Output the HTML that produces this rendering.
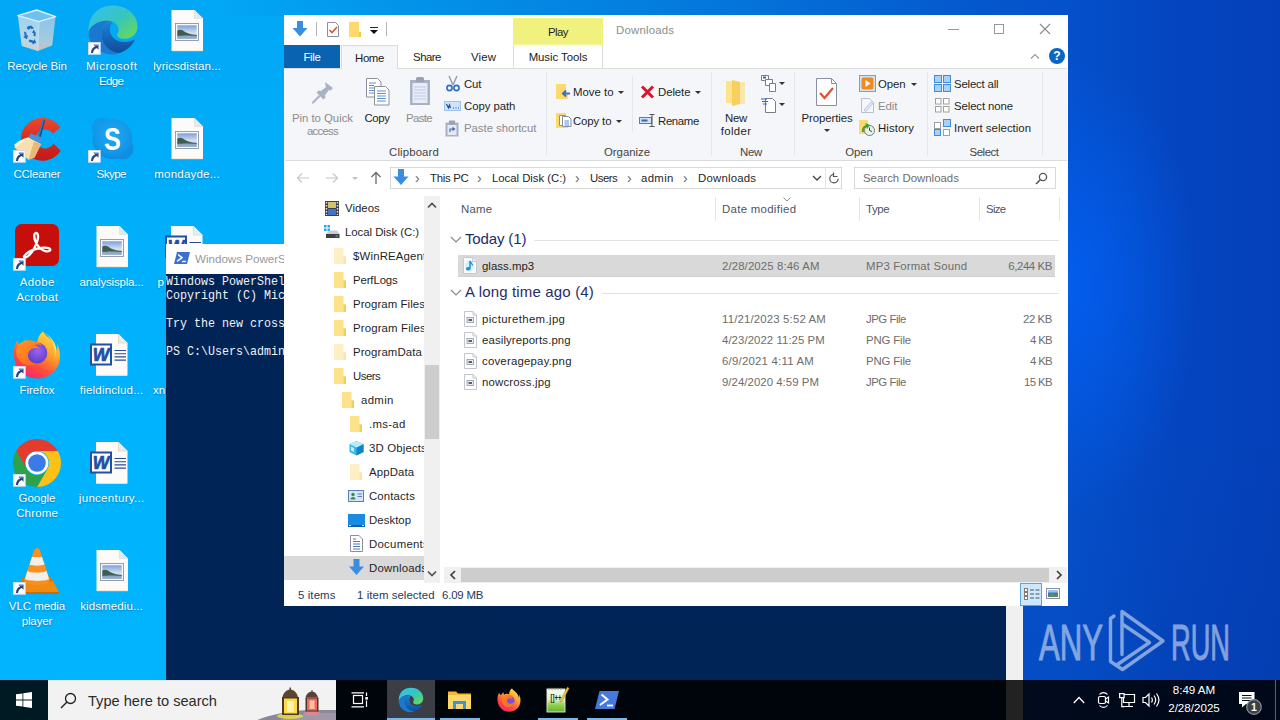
<!DOCTYPE html>
<html lang="en">
<head>
<meta charset="utf-8">
<title>Downloads</title>
<style>
*{box-sizing:border-box;margin:0;padding:0}
html,body{width:1280px;height:720px;overflow:hidden}
body{position:relative;font-family:"Liberation Sans",sans-serif;font-size:12px;color:#000;background:#01b0fb}
.abs{position:absolute}
.t{position:absolute;white-space:nowrap;line-height:14px;font-size:11.4px}
/* wallpaper */
#wp-right{left:1000px;top:0;width:280px;height:720px;background:radial-gradient(ellipse 130px 230px at 68px 285px,#035dee 0%,rgba(3,93,238,.55) 45%,rgba(3,93,238,0) 100%),linear-gradient(180deg,rgba(0,0,0,0) 60%,rgba(0,20,60,.06) 100%),linear-gradient(90deg,#0550cb 24%,#0446c0 60%,#0440b9 100%)}
#wp-top{left:0;top:0;width:1280px;height:16px;background:linear-gradient(90deg,#02a7f5 0%,#02a7f5 17%,#0398ec 28%,#0478dc 55%,#0458cd 76%,#0550cb 83.4%,#0446c0 91.25%,#0440b9 100%)}
#wp-left{left:0;top:0;width:300px;height:720px;background:linear-gradient(180deg,#02a7f5 0%,#01abf8 14%,#00b3fe 58%,#01b4fc 100%)}
/* desktop icons */
.dl{position:absolute;width:90px;text-align:center;color:#fff;font-size:11.5px;line-height:15px;white-space:nowrap;text-shadow:0 1px 1.500px rgba(0,0,0,.28),0 0 1px rgba(0,0,0,.15)}
.di{position:absolute}
.sc{position:absolute;width:11px;height:11px;background:#fff;border:1px solid #c9d3dc}
/* powershell */
#ps{left:166px;top:244px;width:857px;height:476px;background:#012456}
#ps-title{left:0;top:0;width:857px;height:30px;background:#fff}
#ps-scroll{left:840px;top:30px;width:17px;height:446px;background:#f0f0f0}
.pst{position:absolute;left:0;white-space:pre;font-family:"Liberation Mono",monospace;font-size:13.2px;line-height:14px;color:#f2f2f2;transform:scaleX(.8838);transform-origin:0 0}
/* explorer */
#ex{left:284px;top:15px;width:784px;height:591px;background:#fff;overflow:hidden}

/* explorer details */
#exc .t{color:#1f1f1f}
.g{color:#8c8c8c !important}
.sep{position:absolute;width:1px;background:#e5e7ea}
.tab{position:absolute;top:45px;height:23px;text-align:center;line-height:25px;font-size:11.4px;color:#1b1b1b}
.arr{position:absolute;width:0;height:0;border-left:3px solid transparent;border-right:3px solid transparent;border-top:3px solid #333}
.grp{position:absolute;top:145px;text-align:center;line-height:14px;color:#444;font-size:11.4px}
.chev{color:#666 !important;font-size:14px !important}
.hd{color:#4b5566 !important}
.gh{color:#1f2d68 !important;font-size:15px !important;line-height:18px !important}
.dm{color:#6d6d6d !important}
.sb{color:#1e395b !important}
/* taskbar */
#tb{left:0;top:680px;width:1280px;height:40px;background:rgba(0,0,0,.86)}
</style>
</head>
<body>
<div class="abs" id="wp-left"></div>
<div class="abs" id="wp-right"></div>
<div class="abs" id="wp-top"></div>

<!-- DESKTOP ICONS -->
<div class="abs" id="desk" style="left:0;top:0;width:1280px;height:680px;overflow:hidden">
<svg class="abs" style="left:13px;top:6px" width="48" height="48" viewBox="0 0 48 48">
<defs><linearGradient id="rb10" x1="0" y1="0" x2="0" y2="1"><stop offset="0" stop-color="#a9d6f0"/><stop offset=".7" stop-color="#c6dde9"/><stop offset="1" stop-color="#e6cfc4"/></linearGradient>
<linearGradient id="rb20" x1="0" y1="0" x2="0" y2="1"><stop offset="0" stop-color="#96c8e6"/><stop offset=".7" stop-color="#b4cedc"/><stop offset="1" stop-color="#d8c2b8"/></linearGradient></defs>
<path d="M4.800 9.600L23.700 4l18.900 6.700L25.900 15.700z" fill="#7cc3ee" opacity=".9"/>
<path d="M4.800 9.600l21.100 6.100L24.800 45.100 8.700 40.100z" fill="url(#rb10)" opacity=".92"/>
<path d="M25.900 15.700l16.700-5-3.400 28.900-14.400 5.500z" fill="url(#rb20)" opacity=".92"/>
<path d="M4.800 9.600L23.700 4l18.900 6.700L25.900 15.700z" fill="none" stroke="#dff0fa" stroke-width="1.400" stroke-linejoin="round"/>
<path d="M25.900 15.700L24.800 45.100" stroke="#d4e6f2" stroke-width=".8"/>
<g fill="#1a6cc4"><path d="M14.500 20.500l3.500-1 3 2.500-2.500 1.200-1-1.200-1.500 1.800-2.200-1z"/><path d="M11 25.500l2.200 1 .5 3.300 1.500-.5-1.300 4-3.700-2.300 1.500-.7z"/><path d="M16.500 33.500l4.300 1.200.4-1.700 2.200 3.600-4 1.800.2-1.500-4-1.300z"/><path d="M20.500 23.500l2.300 3.500-.4 3.500-2.100-1 .8-2-1.900-.5z"/></g>
</svg>
<div class="dl" style="left:-8.06px;top:59px;letter-spacing:-0.11px">Recycle Bin</div>
<svg class="abs" style="left:86.5px;top:4px" width="52" height="52" viewBox="0 0 50 50">
<defs><linearGradient id="eg11" x1="0" y1="0" x2="1" y2="1"><stop offset="0" stop-color="#35c1f1"/><stop offset=".5" stop-color="#36c5c0"/><stop offset="1" stop-color="#6fdc4a"/></linearGradient>
<linearGradient id="eg21" x1="0" y1="0" x2="0" y2="1"><stop offset="0" stop-color="#1d84d8"/><stop offset="1" stop-color="#114a9b"/></linearGradient></defs>
<path d="M1.500 24C2 10 12 1.500 25 1.500c14 0 23.500 9.500 23.500 20 0 7.500-5.500 12-12 12-5 0-7.500-2-7.500-4 0-1.500 1.500-2 1.500-5 0-4-4-8.500-11-8.500C10 16 3 21 1.500 28z" fill="url(#eg11)"/>
<path d="M19.500 16C10 16 1.500 22 1.500 28c.5 11 10 20.500 22 20.500 3 0 5.500-.5 8-1.500C22 46 14 38 14 29c0-6 3-10.500 7.500-13z" fill="#1b78d0"/>
<path d="M21.500 16C17 19 14 23.500 14 29c0 10 8 17.500 17.500 18 6-2 11-6 14-11.500.5-1-.5-1.500-1.500-1-2.500 1.500-5 2-8 2-8.500 0-14-5.500-14-12 0-3 1-5 2.500-7-1-.5-2-1-3-1.500z" fill="url(#eg21)"/>
</svg>
<svg class="abs" style="left:87.5px;top:42px" width="13" height="13" viewBox="0 0 13 13"><rect width="12.500" height="12.500" fill="#fdfdfd"/><rect x=".4" y=".4" width="11.800" height="11.800" fill="none" stroke="#c3d3e2" stroke-width=".8"/><path d="M5.500 2.800h5v5l-1.700-1.700C6.800 7 5.300 8.500 5 11H3c0-3.500 1.700-5.800 4.200-6.500z" fill="#24457f"/><path d="M5.500 2.800h5v1.200h-3.800z" fill="#4d8bd8"/></svg>
<div class="dl" style="left:66.77px;top:59px;letter-spacing:0.54px">Microsoft</div><div class="dl" style="left:66.19px;top:74px;letter-spacing:-0.61px">Edge</div>
<svg class="abs" style="left:171px;top:9px" width="34" height="44" viewBox="0 0 34 44">
<defs><linearGradient id="sky2" x1="0" y1="0" x2="0" y2="1"><stop offset="0" stop-color="#7f9fdb"/><stop offset=".55" stop-color="#cfdff0"/><stop offset="1" stop-color="#b5cce0"/></linearGradient></defs>
<path d="M.5 1h23l8.500 8.500V42H.5z" fill="#fcfbfa"/><path d="M23.500 1v8.500h8.500z" fill="#dcebf7"/><path d="M23.500 1v8.500h8.500" stroke="#e6d9cf" stroke-width=".7" fill="none"/>
<path d="M1 41.700h30.500" stroke="#f3e6da" stroke-width="1"/>
<rect x="4.500" y="14.500" width="23" height="17" fill="#f6f7f8" stroke="#8a97a4" stroke-width=".9"/>
<rect x="6.300" y="16.300" width="19.400" height="13.400" fill="url(#sky2)"/>
<path d="M6.300 21.500c2-1.200 4-1.200 6 .3 2.500 2 7 3.800 13.400 4.200v1.200H6.300z" fill="#3f5c50"/>
<path d="M6.300 27c5-.8 14-.8 19.400 0v2.700H6.300z" fill="#8fa9c4"/>
</svg>
<div class="dl" style="left:142.03px;top:59px;letter-spacing:0.07px">lyricsdistan...</div>
<svg class="abs" style="left:12px;top:115px" width="50" height="48" viewBox="0 0 50 48">
<defs><linearGradient id="cc3" x1="0" y1="0" x2="0" y2="1"><stop offset="0" stop-color="#ea4a2c"/><stop offset=".5" stop-color="#d82a20"/><stop offset="1" stop-color="#c01a18"/></linearGradient></defs>
<path d="M48.300 12.400A21.500 21.500 0 1 0 48.700 35.700L41.500 28.500A9.500 9.500 0 1 1 41 18.600z" fill="url(#cc3)"/>
<path d="M31 4.500l-5.300 17.500 2.800 1L33.300 5.500z" fill="#1a4f94"/><path d="M31 4.500l1 .3-5.200 17.700-1.100-.5z" fill="#3b7fd0"/>
<path d="M18.500 18.500l10.500 3.500.5 4-5 2-8.500-4.500z" fill="#4a90d9"/>
<path d="M16 22.500l13 6.500-6.500 13.500-6 2.300L2.500 32.500v-3z" fill="#f8dfae"/>
<path d="M22 26.500l7 2.800-6.500 13.300-6 2.200z" fill="#e9b876"/>
<path d="M2.500 29.500c4-3.500 9-6 13.500-7l2.500 1.200c-5 1.500-10 4.200-14 8z" fill="#fdf0d4"/>
</svg>
<svg class="abs" style="left:13px;top:150px" width="13" height="13" viewBox="0 0 13 13"><rect width="12.500" height="12.500" fill="#fdfdfd"/><rect x=".4" y=".4" width="11.800" height="11.800" fill="none" stroke="#c3d3e2" stroke-width=".8"/><path d="M5.500 2.800h5v5l-1.700-1.700C6.800 7 5.300 8.500 5 11H3c0-3.500 1.700-5.800 4.200-6.500z" fill="#24457f"/><path d="M5.500 2.800h5v1.200h-3.800z" fill="#4d8bd8"/></svg>
<div class="dl" style="left:-8.10px;top:167px;letter-spacing:-0.20px">CCleaner</div>
<svg class="abs" style="left:87.5px;top:114px" width="48" height="48" viewBox="0 0 48 48">
<defs><radialGradient id="sk4" cx=".5" cy=".4" r=".65"><stop offset="0" stop-color="#1fa9f3"/><stop offset=".7" stop-color="#1297e8"/><stop offset="1" stop-color="#0d85dc"/></radialGradient></defs>
<circle cx="14" cy="14" r="10.500" fill="#119aea"/><circle cx="35" cy="35" r="10.500" fill="#0f8fe2"/>
<circle cx="24.500" cy="25" r="20" fill="url(#sk4)"/>
<text x="0" y="0" transform="translate(24.500 36) scale(.8 1)" font-family="Liberation Sans, sans-serif" font-weight="bold" font-size="31.500" fill="#fff" text-anchor="middle">S</text>
</svg>
<svg class="abs" style="left:87.5px;top:150px" width="13" height="13" viewBox="0 0 13 13"><rect width="12.500" height="12.500" fill="#fdfdfd"/><rect x=".4" y=".4" width="11.800" height="11.800" fill="none" stroke="#c3d3e2" stroke-width=".8"/><path d="M5.500 2.800h5v5l-1.700-1.700C6.800 7 5.300 8.500 5 11H3c0-3.500 1.700-5.800 4.200-6.500z" fill="#24457f"/><path d="M5.500 2.800h5v1.200h-3.800z" fill="#4d8bd8"/></svg>
<div class="dl" style="left:66.24px;top:167px;letter-spacing:-0.51px">Skype</div>
<svg class="abs" style="left:171px;top:117px" width="34" height="44" viewBox="0 0 34 44">
<defs><linearGradient id="sky5" x1="0" y1="0" x2="0" y2="1"><stop offset="0" stop-color="#7f9fdb"/><stop offset=".55" stop-color="#cfdff0"/><stop offset="1" stop-color="#b5cce0"/></linearGradient></defs>
<path d="M.5 1h23l8.500 8.500V42H.5z" fill="#fcfbfa"/><path d="M23.500 1v8.500h8.500z" fill="#dcebf7"/><path d="M23.500 1v8.500h8.500" stroke="#e6d9cf" stroke-width=".7" fill="none"/>
<path d="M1 41.700h30.500" stroke="#f3e6da" stroke-width="1"/>
<rect x="4.500" y="14.500" width="23" height="17" fill="#f6f7f8" stroke="#8a97a4" stroke-width=".9"/>
<rect x="6.300" y="16.300" width="19.400" height="13.400" fill="url(#sky5)"/>
<path d="M6.300 21.500c2-1.200 4-1.200 6 .3 2.500 2 7 3.800 13.400 4.200v1.200H6.300z" fill="#3f5c50"/>
<path d="M6.300 27c5-.8 14-.8 19.400 0v2.700H6.300z" fill="#8fa9c4"/>
</svg>
<div class="dl" style="left:142.10px;top:167px;letter-spacing:0.20px">mondayde...</div>
<svg class="abs" style="left:14px;top:223px" width="46" height="44" viewBox="0 0 46 44">
<rect x="1" y="1" width="44" height="42" rx="7" fill="#c60f0b"/>
<path d="M10 33c1.500-4 8-7.500 13.500-9 5-1.400 11-1.500 12.500.5 1 1.500-1 3-4 2.500-5-1-9.500-6.500-11-12-1-4-.8-7.500.8-8 1.700-.4 2.700 2.500 2 6.500-1 6-5 14-9 18-2 2-4.300 3-4.800 1.500z" fill="none" stroke="#fff" stroke-width="2.400" transform="translate(0 3.500) scale(1 .92)"/>
</svg>
<svg class="abs" style="left:13px;top:258px" width="13" height="13" viewBox="0 0 13 13"><rect width="12.500" height="12.500" fill="#fdfdfd"/><rect x=".4" y=".4" width="11.800" height="11.800" fill="none" stroke="#c3d3e2" stroke-width=".8"/><path d="M5.500 2.800h5v5l-1.700-1.700C6.800 7 5.300 8.500 5 11H3c0-3.500 1.700-5.800 4.200-6.500z" fill="#24457f"/><path d="M5.500 2.800h5v1.200h-3.800z" fill="#4d8bd8"/></svg>
<div class="dl" style="left:-7.83px;top:275px;letter-spacing:0.35px">Adobe</div><div class="dl" style="left:-7.83px;top:290px;letter-spacing:0.34px">Acrobat</div>
<svg class="abs" style="left:95.5px;top:225px" width="34" height="44" viewBox="0 0 34 44">
<defs><linearGradient id="sky7" x1="0" y1="0" x2="0" y2="1"><stop offset="0" stop-color="#7f9fdb"/><stop offset=".55" stop-color="#cfdff0"/><stop offset="1" stop-color="#b5cce0"/></linearGradient></defs>
<path d="M.5 1h23l8.500 8.500V42H.5z" fill="#fcfbfa"/><path d="M23.500 1v8.500h8.500z" fill="#dcebf7"/><path d="M23.500 1v8.500h8.500" stroke="#e6d9cf" stroke-width=".7" fill="none"/>
<path d="M1 41.700h30.500" stroke="#f3e6da" stroke-width="1"/>
<rect x="4.500" y="14.500" width="23" height="17" fill="#f6f7f8" stroke="#8a97a4" stroke-width=".9"/>
<rect x="6.300" y="16.300" width="19.400" height="13.400" fill="url(#sky7)"/>
<path d="M6.300 21.500c2-1.200 4-1.200 6 .3 2.500 2 7 3.800 13.400 4.200v1.200H6.300z" fill="#3f5c50"/>
<path d="M6.300 27c5-.8 14-.8 19.400 0v2.700H6.300z" fill="#8fa9c4"/>
</svg>
<div class="dl" style="left:66.41px;top:275px;letter-spacing:-0.18px">analysispla...</div>
<svg class="abs" style="left:165px;top:225px" width="40" height="44" viewBox="0 0 40 44">
<path d="M6 1h22.500l9 9v32.500H6z" fill="#fdfbf8"/><path d="M28.500 1v9h9z" fill="#e4eef8"/><path d="M28.500 1v9h9" stroke="#e2cfc4" stroke-width=".8" fill="none"/>
<path d="M6.500 42.300h30.500" stroke="#f3e6da" stroke-width="1"/>
<path d="M24.500 17.500h11.500M24.500 20.700h11.500M24.500 23.900h11.500M24.500 27.100h11.500" stroke="#2a4a96" stroke-width="1.100"/>
<rect x="1" y="11.500" width="20" height="20" fill="#fff" stroke="#1f4fa8" stroke-width="2"/>
<text x="11" y="27.800" font-family="Liberation Sans, sans-serif" font-weight="bold" font-style="italic" font-size="17.500" fill="#1f4fa6" stroke="#1f4fa6" stroke-width=".7" text-anchor="middle">W</text>
</svg>
<svg class="abs" style="left:13px;top:330px" width="48" height="50" viewBox="0 0 48 50">
<defs><linearGradient id="ff19" x1=".8" y1="0" x2=".2" y2="1"><stop offset="0" stop-color="#ffe14a"/><stop offset=".35" stop-color="#ffa52a"/><stop offset=".7" stop-color="#ff4a3d"/><stop offset="1" stop-color="#f1217c"/></linearGradient>
<radialGradient id="ff29" cx=".55" cy=".4" r=".65"><stop offset="0" stop-color="#9a62f5"/><stop offset="1" stop-color="#5a3cc0"/></radialGradient>
<linearGradient id="ff39" x1="0" y1="0" x2="1" y2="1"><stop offset="0" stop-color="#ff9a1f"/><stop offset="1" stop-color="#ff5a2a"/></linearGradient></defs>
<path d="M30 1.500c-4 3-6 8-5.500 12.500C21 12 17 12.500 14 14.500c0-2-.5-3.500-1.500-5-1 2-3 3-4.500 5.500C5.500 14 4.500 12 4.500 10 2 14 .5 19 1 26 2 39 12 48.500 24.500 48.500S47 39 47 26c0-5-1-8.500-3-12 .5 3 .5 5 0 7-1-6-4.500-10-7.500-12.500C33.500 6 31 4 30 1.500z" fill="url(#ff19)"/>
<circle cx="23.800" cy="23" r="10.500" fill="url(#ff29)"/>
<path transform="translate(-.7 -2)" d="M4 24C4 16 11 11.500 19 12.500c5 .5 9 2.500 11 5.500-2.500-1.500-5.500-2-8-1 2.500.5 4.500 2 5.500 4-3-1.500-6.500-1.500-9 .5-2.500 2-3.500 5-2.500 8 1 3.500 4.500 6 8.500 6-3 2-7.500 2.500-11.500 1C8 34.500 4 30 4 24z" fill="url(#ff39)"/>
<path d="M30 1.500C36 6 42 13 42 22c0 4-1 7-2 9 4-6 4-14 1-19-2.500-4.500-7-8-11-10.500z" fill="#ffe96a" opacity=".8"/>
</svg>
<svg class="abs" style="left:13px;top:366px" width="13" height="13" viewBox="0 0 13 13"><rect width="12.500" height="12.500" fill="#fdfdfd"/><rect x=".4" y=".4" width="11.800" height="11.800" fill="none" stroke="#c3d3e2" stroke-width=".8"/><path d="M5.500 2.800h5v5l-1.700-1.700C6.800 7 5.300 8.500 5 11H3c0-3.500 1.700-5.800 4.200-6.500z" fill="#24457f"/><path d="M5.500 2.800h5v1.200h-3.800z" fill="#4d8bd8"/></svg>
<div class="dl" style="left:-8.01px;top:383px;letter-spacing:-0.02px">Firefox</div>
<svg class="abs" style="left:89.5px;top:333px" width="40" height="44" viewBox="0 0 40 44">
<path d="M6 1h22.500l9 9v32.500H6z" fill="#fdfbf8"/><path d="M28.500 1v9h9z" fill="#e4eef8"/><path d="M28.500 1v9h9" stroke="#e2cfc4" stroke-width=".8" fill="none"/>
<path d="M6.500 42.300h30.500" stroke="#f3e6da" stroke-width="1"/>
<path d="M24.500 17.500h11.500M24.500 20.700h11.500M24.500 23.900h11.500M24.500 27.100h11.500" stroke="#2a4a96" stroke-width="1.100"/>
<rect x="1" y="11.500" width="20" height="20" fill="#fff" stroke="#1f4fa8" stroke-width="2"/>
<text x="11" y="27.800" font-family="Liberation Sans, sans-serif" font-weight="bold" font-style="italic" font-size="17.500" fill="#1f4fa6" stroke="#1f4fa6" stroke-width=".7" text-anchor="middle">W</text>
</svg>
<div class="dl" style="left:66.61px;top:383px;letter-spacing:0.21px">fieldinclud...</div>
<svg class="abs" style="left:12px;top:438px" width="50" height="50" viewBox="0 0 50 50">
<path d="M4.220 13A24 24 0 0 1 45.780 13L25 13A12 12 0 0 0 14.600 31z" fill="#e33b2e"/>
<path d="M45.780 13A24 24 0 0 1 25 49L35.400 31A12 12 0 0 0 25 13z" fill="#fbc116"/>
<path d="M25 49A24 24 0 0 1 4.220 13L14.600 31A12 12 0 0 0 35.400 31z" fill="#2da24a"/>
<circle cx="25" cy="25" r="11.400" fill="#fff"/><circle cx="25" cy="25" r="8.800" fill="#3a7be8"/>
</svg>
<svg class="abs" style="left:13px;top:474px" width="13" height="13" viewBox="0 0 13 13"><rect width="12.500" height="12.500" fill="#fdfdfd"/><rect x=".4" y=".4" width="11.800" height="11.800" fill="none" stroke="#c3d3e2" stroke-width=".8"/><path d="M5.500 2.800h5v5l-1.700-1.700C6.800 7 5.300 8.500 5 11H3c0-3.500 1.700-5.800 4.200-6.500z" fill="#24457f"/><path d="M5.500 2.800h5v1.200h-3.800z" fill="#4d8bd8"/></svg>
<div class="dl" style="left:-8.02px;top:491px;letter-spacing:-0.03px">Google</div><div class="dl" style="left:-7.92px;top:506px;letter-spacing:0.17px">Chrome</div>
<svg class="abs" style="left:89.5px;top:441px" width="40" height="44" viewBox="0 0 40 44">
<path d="M6 1h22.500l9 9v32.500H6z" fill="#fdfbf8"/><path d="M28.500 1v9h9z" fill="#e4eef8"/><path d="M28.500 1v9h9" stroke="#e2cfc4" stroke-width=".8" fill="none"/>
<path d="M6.500 42.300h30.500" stroke="#f3e6da" stroke-width="1"/>
<path d="M24.500 17.500h11.500M24.500 20.700h11.500M24.500 23.900h11.500M24.500 27.100h11.500" stroke="#2a4a96" stroke-width="1.100"/>
<rect x="1" y="11.500" width="20" height="20" fill="#fff" stroke="#1f4fa8" stroke-width="2"/>
<text x="11" y="27.800" font-family="Liberation Sans, sans-serif" font-weight="bold" font-style="italic" font-size="17.500" fill="#1f4fa6" stroke="#1f4fa6" stroke-width=".7" text-anchor="middle">W</text>
</svg>
<div class="dl" style="left:66.65px;top:491px;letter-spacing:0.29px">juncentury...</div>
<svg class="abs" style="left:14px;top:547px" width="46" height="48" viewBox="0 0 46 48">
<path d="M9 30h28l8 15H1z" fill="#f08a10"/><path d="M1 45h44v2H1z" fill="#c96a06"/>
<path d="M9 30h28l2 4c-4 3-28 3-32 0z" fill="#d97508"/>
<path d="M23 1c1.500 0 2.500 1 3 2.500L36 33c0 3-6 5-13 5s-13-2-13-5L20 3.500C20.500 2 21.500 1 23 1z" fill="#f7901e"/>
<path d="M18 10h10l2.500 7.500c-3 1.500-12 1.500-15 0z" fill="#f3f0ec"/>
<path d="M13.500 24c4 2 15 2 19 0l2.500 8c-4 2.500-20 2.500-24 0z" fill="#f3f0ec"/>
</svg>
<svg class="abs" style="left:13px;top:582px" width="13" height="13" viewBox="0 0 13 13"><rect width="12.500" height="12.500" fill="#fdfdfd"/><rect x=".4" y=".4" width="11.800" height="11.800" fill="none" stroke="#c3d3e2" stroke-width=".8"/><path d="M5.500 2.800h5v5l-1.700-1.700C6.800 7 5.300 8.500 5 11H3c0-3.500 1.700-5.800 4.200-6.500z" fill="#24457f"/><path d="M5.500 2.800h5v1.200h-3.800z" fill="#4d8bd8"/></svg>
<div class="dl" style="left:-8.03px;top:599px;letter-spacing:-0.07px">VLC media</div><div class="dl" style="left:-8.06px;top:614px;letter-spacing:-0.12px">player</div>
<svg class="abs" style="left:95.5px;top:549px" width="34" height="44" viewBox="0 0 34 44">
<defs><linearGradient id="sky15" x1="0" y1="0" x2="0" y2="1"><stop offset="0" stop-color="#7f9fdb"/><stop offset=".55" stop-color="#cfdff0"/><stop offset="1" stop-color="#b5cce0"/></linearGradient></defs>
<path d="M.5 1h23l8.500 8.500V42H.5z" fill="#fcfbfa"/><path d="M23.500 1v8.500h8.500z" fill="#dcebf7"/><path d="M23.500 1v8.500h8.500" stroke="#e6d9cf" stroke-width=".7" fill="none"/>
<path d="M1 41.700h30.500" stroke="#f3e6da" stroke-width="1"/>
<rect x="4.500" y="14.500" width="23" height="17" fill="#f6f7f8" stroke="#8a97a4" stroke-width=".9"/>
<rect x="6.300" y="16.300" width="19.400" height="13.400" fill="url(#sky15)"/>
<path d="M6.300 21.500c2-1.200 4-1.200 6 .3 2.500 2 7 3.800 13.400 4.200v1.200H6.300z" fill="#3f5c50"/>
<path d="M6.300 27c5-.8 14-.8 19.400 0v2.700H6.300z" fill="#8fa9c4"/>
</svg>
<div class="dl" style="left:66.55px;top:599px;letter-spacing:0.10px">kidsmediu...</div>
<div class="dl" style="left:157.5px;top:275px;width:auto;text-align:left">p</div>
<div class="dl" style="left:153px;top:383px;width:auto;text-align:left">xn</div>
</div>
<!-- POWERSHELL -->
<div class="abs" id="ps">
  <div class="abs" id="ps-title"></div>
  <svg class="abs" style="left:8px;top:8px" width="16" height="12" viewBox="0 0 16 12"><path d="M3 0h13l-3 12H0z" fill="#3d6fd0"/><path d="M4 2.500l4 3.200-5 3.600" fill="none" stroke="#fff" stroke-width="1.500"/><path d="M8 9.500h4" stroke="#fff" stroke-width="1.400"/></svg>
  <span class="t" style="left:29px;top:8px;color:#999;font-size:11.6px">Windows PowerShell</span>
  <div class="abs" id="ps-scroll"></div>
  <div class="pst" style="top:31px">Windows PowerShell</div>
  <div class="pst" style="top:45px">Copyright (C) Microsoft Corporation. All rights reserved.</div>
  <div class="pst" style="top:73px">Try the new cross-platform PowerShell</div>
  <div class="pst" style="top:101px">PS C:\Users\admin&gt; </div>
</div>
<!-- EXPLORER -->
<div class="abs" id="ex"></div>
<div class="abs" id="exc" style="left:0;top:0;width:1280px;height:720px">
  <!-- title bar -->
  <div class="abs" style="left:513px;top:18px;width:90px;height:29px;background:linear-gradient(180deg,#f1f17f 0,#f1f17f 26px,#fbfbd8 27.500px,#fff 29px)"></div>
  <span class="t" style="left:513px;top:25px;width:90px;text-align:center;letter-spacing:-0.54px">Play</span>
  <span class="t g" style="left:616px;top:23px;letter-spacing:0.20px">Downloads</span>
  <!-- window controls -->
  <div class="abs" style="left:948px;top:29px;width:11px;height:1px;background:#979797"></div>
  <div class="abs" style="left:994px;top:24px;width:10px;height:10px;border:1px solid #979797"></div>
  <svg class="abs" style="left:1039px;top:23px" width="12" height="12" viewBox="0 0 12 12"><path d="M1 1L11 11M11 1L1 11" stroke="#8a8a8a" stroke-width="1.1" fill="none"/></svg>
  <!-- tabs -->
  <div class="tab" style="left:284px;width:56px;background:#0a63b1;color:#fff;letter-spacing:-0.29px">File</div>
  <div class="tab" style="left:341px;width:57px;height:24px;background:#f4f6f9;border:1px solid #dadbdc;border-bottom:none;line-height:24px;letter-spacing:-0.40px">Home</div>
  <div class="tab" style="left:398px;width:58px;letter-spacing:-0.52px">Share</div>
  <div class="tab" style="left:456px;width:55px;letter-spacing:0.12px">View</div>
  <div class="tab" style="left:513px;width:90px;border-left:1px solid #dcdcdc;border-right:1px solid #dcdcdc;letter-spacing:-0.05px">Music Tools</div>
  <!-- ribbon body -->
  <div class="abs" style="left:285px;top:68px;width:782px;height:93px;background:#f4f6f9;border-top:1px solid #dadbdc;border-bottom:1px solid #dadbdc"></div>
  <div class="abs" style="left:342px;top:68px;width:55px;height:1px;background:#f4f6f9"></div>
  <!-- quick access toolbar -->
  <svg class="abs" style="left:291px;top:20px" width="18" height="18" viewBox="0 0 18 18"><path d="M6 1h6v7h4.5L9 16.5 1.500 8H6z" fill="#3b8ede"/></svg>
  <div class="abs" style="left:316px;top:22px;width:1px;height:14px;background:#b5b5b5"></div>
  <svg class="abs" style="left:326px;top:21px" width="14" height="17" viewBox="0 0 14 17"><path d="M1.500 1.500h8l3 3v11h-11z" fill="#fff" stroke="#8a8fa3" stroke-width="1"/><path d="M3.500 9l2.500 2.500 5-5.500" fill="none" stroke="#e0532f" stroke-width="1.600"/></svg>
  <svg class="abs" style="left:348px;top:21px" width="14" height="17" viewBox="0 0 14 17"><path d="M1 1h10v10h2v5H1z" fill="#ffd96b"/><path d="M11 11h2v5h-2z" fill="#f2c64a"/></svg>
  <div class="abs" style="left:370px;top:27px;width:8px;height:1px;background:#222"></div>
  <div class="arr" style="left:370px;top:30px;border-left-width:4px;border-right-width:4px;border-top-width:4px;border-top-color:#111"></div>
  <div class="abs" style="left:386px;top:22px;width:1px;height:14px;background:#b5b5b5"></div>
  <!-- collapse + help -->
  <svg class="abs" style="left:1030px;top:52px" width="10" height="8" viewBox="0 0 10 8"><path d="M1 6.500l4-4 4 4" fill="none" stroke="#9a9a9a" stroke-width="1.200"/></svg>
  <div class="abs" style="left:1049px;top:48px;width:16px;height:16px;border-radius:8px;background:#0b66c2;color:#fff;font-weight:bold;font-size:12px;line-height:16px;text-align:center">?</div>

  <!-- RIBBON: clipboard -->
  <svg class="abs" style="left:310px;top:80px" width="26" height="26" viewBox="0 0 26 26"><g fill="#aab3c4"><path d="M15 2l8 6-2.500 2.500-1.500-.500-4 5 .500 2.500-2 2-7-7 2-2 2.500.500 5-4-.500-1.500z"/><path d="M9 15l1.500 1.500-7 7H2v-1.500z"/></g></svg>
  <span class="t g" style="left:284px;top:111px;width:77px;text-align:center;letter-spacing:-0.04px">Pin to Quick</span>
  <span class="t g" style="left:284px;top:124px;width:77px;text-align:center;letter-spacing:-0.75px">access</span>
  <svg class="abs" style="left:365px;top:77px" width="26" height="30" viewBox="0 0 26 30"><g fill="#fff" stroke="#8b8f99" stroke-width="1"><path d="M1.500 1.500h11l3.500 3.500v15h-14.500z"/><path d="M9.500 9.500h11l3.500 3.500v15h-14.500z"/></g><g stroke="#5b8fd6" stroke-width="1"><path d="M4 6h7M4 8.500h5M4 11h5M4 13.500h5M4 16h5"/><path d="M12 14h9M12 16.500h9M12 19h9M12 21.500h9M12 24h9"/></g></svg>
  <span class="t" style="left:357px;top:111px;width:40px;text-align:center;letter-spacing:-0.40px">Copy</span>
  <svg class="abs" style="left:409px;top:76px" width="22" height="30" viewBox="0 0 22 30"><rect x="1" y="4" width="20" height="25" fill="#a9b1c4"/><rect x="7" y="1" width="8" height="5" rx="1.500" fill="#9aa2b5"/><rect x="3.500" y="7" width="15" height="20" fill="#e8ecf8"/><path d="M5 11h12M5 14h12M5 17h12M5 20h12M5 23h12" stroke="#c3cbe6" stroke-width="1"/></svg>
  <span class="t g" style="left:399px;top:111px;width:40px;text-align:center;letter-spacing:-0.63px">Paste</span>
  <svg class="abs" style="left:445px;top:75px" width="16" height="17" viewBox="0 0 16 17"><path d="M4 1l4 9M12 1L8 10" stroke="#8d96a8" stroke-width="1.300" fill="none"/><circle cx="4.500" cy="13" r="2.600" fill="none" stroke="#2b6fc4" stroke-width="1.600"/><circle cx="11.500" cy="13" r="2.600" fill="none" stroke="#2b6fc4" stroke-width="1.600"/></svg>
  <span class="t" style="left:464px;top:77px;letter-spacing:-0.18px">Cut</span>
  <svg class="abs" style="left:444px;top:101px" width="17" height="10" viewBox="0 0 17 10"><rect x=".5" y=".5" width="16" height="9" fill="#cfe3fb" stroke="#9cc3ee"/><path d="M2.500 3l2 4 1-3 1 3M9 7h1M11.500 7h1M14 7h1" stroke="#1f4e9e" stroke-width="1.200" fill="none"/></svg>
  <span class="t" style="left:464px;top:99px;letter-spacing:-0.07px">Copy path</span>
  <svg class="abs" style="left:445px;top:120px" width="14" height="17" viewBox="0 0 14 17"><rect x=".5" y="2.500" width="13" height="14" fill="#a9b1c4"/><rect x="4" y=".5" width="6" height="4" fill="#9aa2b5"/><rect x="2.500" y="5" width="9" height="10" fill="#e4e8f4"/><path d="M5 12V9h4M7.500 7.500L9.500 9 7.500 10.500" stroke="#4669a8" stroke-width="1.200" fill="none"/></svg>
  <span class="t g" style="left:464px;top:121px;letter-spacing:-0.03px">Paste shortcut</span>
  <div class="grp" style="left:374px;width:80px;letter-spacing:0.13px">Clipboard</div>
  <div class="sep" style="left:546px;top:72px;height:84px"></div>

  <!-- RIBBON: organize -->
  <svg class="abs" style="left:555px;top:83px" width="16" height="17" viewBox="0 0 16 17"><path d="M1 1h10v10h2v5H1z" fill="#ffd96b"/><path d="M15 10.500H8.500M11 7.500l-3 3 3 3" stroke="#3572c6" stroke-width="2" fill="none"/></svg>
  <span class="t" style="left:573px;top:85px;letter-spacing:0.01px">Move to</span>
  <div class="arr" style="left:618px;top:91px"></div>
  <svg class="abs" style="left:555px;top:112px" width="17" height="17" viewBox="0 0 17 17"><path d="M1 1h10v10h2v5H1z" fill="#ffd96b"/><path d="M4.500 3.500h6l2.500 2.500v7.500h-8.500z" fill="#fff" stroke="#8b8f99"/><path d="M7.500 4.500h6l2.500 2.500v7.500h-8.500z" fill="#fff" stroke="#8b8f99"/><path d="M9.500 9h4.500M9.500 11h4.500M9.500 13h4.500" stroke="#5b8fd6"/></svg>
  <span class="t" style="left:573px;top:114px;letter-spacing:-0.13px">Copy to</span>
  <div class="arr" style="left:616px;top:120px"></div>
  <div class="sep" style="left:632px;top:76px;height:56px"></div>
  <svg class="abs" style="left:640px;top:85px" width="15" height="14" viewBox="0 0 15 14"><path d="M2 1.500l11 11M13 1.500L2 12.500" stroke="#d8172c" stroke-width="3" fill="none"/></svg>
  <span class="t" style="left:658px;top:85px;letter-spacing:-0.08px">Delete</span>
  <div class="arr" style="left:695px;top:91px"></div>
  <svg class="abs" style="left:639px;top:113px" width="17" height="15" viewBox="0 0 17 15"><rect x=".5" y="4.500" width="12" height="6" fill="#cfe3fb" stroke="#4a7fc9"/><rect x="2.500" y="6.500" width="6" height="2" fill="#2f66b8"/><path d="M10.500 1.500h5M13 1.500v12M10.500 13.500h5" stroke="#555" stroke-width="1"/></svg>
  <span class="t" style="left:658px;top:114px;letter-spacing:-0.35px">Rename</span>
  <div class="grp" style="left:587px;width:80px;letter-spacing:-0.03px">Organize</div>
  <div class="sep" style="left:711px;top:72px;height:84px"></div>

  <!-- RIBBON: new -->
  <svg class="abs" style="left:724px;top:79px" width="24" height="28" viewBox="0 0 24 28"><path d="M2 2h13v22H2z" fill="#ffe38a"/><path d="M8 1l8 2v22l-8 2z" fill="#f7cf5e"/><path d="M16 3h5v22h-5z" fill="#fbd870" opacity=".55"/></svg>
  <span class="t" style="left:711px;top:111px;width:50px;text-align:center;letter-spacing:-0.30px">New</span>
  <span class="t" style="left:711px;top:124px;width:50px;text-align:center;letter-spacing:0.35px">folder</span>
  <svg class="abs" style="left:761px;top:75px" width="16" height="17" viewBox="0 0 16 17"><g fill="#fff" stroke="#777e8c"><path d="M.5 .5h7v5h-7z"/><path d="M4.500 4.500h7v6h-7z"/><path d="M8.500 8.500h6v8h-6z"/></g><path d="M2 2.500h3" stroke="#2f66b8" stroke-width="2"/></svg>
  <div class="arr" style="left:779px;top:82px"></div>
  <svg class="abs" style="left:761px;top:96px" width="16" height="17" viewBox="0 0 16 17"><path d="M4.500 2.500h7l3 3v11h-10z" fill="#fff" stroke="#777e8c"/><path d="M0 3h6M1 5.500h6M2 8h4" stroke="#2f66b8" stroke-width="1"/></svg>
  <div class="arr" style="left:779px;top:103px"></div>
  <div class="grp" style="left:721px;width:60px;letter-spacing:-0.30px">New</div>
  <div class="sep" style="left:794px;top:72px;height:84px"></div>

  <!-- RIBBON: open -->
  <svg class="abs" style="left:815px;top:77px" width="23" height="30" viewBox="0 0 23 30"><path d="M1.500 1.500h15l5 5v22h-20z" fill="#fff" stroke="#8a8fa3"/><path d="M16.500 1.500v5h5" fill="none" stroke="#8a8fa3"/><path d="M5 16l4.500 5L18 11" fill="none" stroke="#e0532f" stroke-width="2.200"/></svg>
  <span class="t" style="left:797px;top:111px;width:60px;text-align:center;letter-spacing:-0.07px">Properties</span>
  <div class="arr" style="left:824px;top:129px"></div>
  <svg class="abs" style="left:859px;top:75px" width="17" height="17" viewBox="0 0 17 17"><rect x=".5" y=".5" width="16" height="16" fill="#cde4fa" stroke="#6aa5e0"/><rect x="2.500" y="2.500" width="12" height="12" rx="2" fill="#f08a1d"/><path d="M6.500 5l5 3.500-5 3.500z" fill="#fff"/></svg>
  <span class="t" style="left:878px;top:77px;letter-spacing:-0.07px">Open</span>
  <div class="arr" style="left:911px;top:83px"></div>
  <svg class="abs" style="left:860px;top:97px" width="15" height="17" viewBox="0 0 15 17"><path d="M1.500 1.500h8l4 4v10h-12z" fill="#f4f6fb" stroke="#b8bfd0"/><path d="M4 13l7-8 2 1.500-7 8z" fill="#dfe5f3" stroke="#b8bfd0" stroke-width=".8"/></svg>
  <span class="t g" style="left:878px;top:99px;letter-spacing:-0.06px">Edit</span>
  <svg class="abs" style="left:858px;top:119px" width="18" height="18" viewBox="0 0 18 18"><path d="M1 1h9v9h2v5H1z" fill="#ffd96b"/><circle cx="11.500" cy="11.500" r="5" fill="#e9f3e6" stroke="#6f7a86"/><path d="M11.500 8.500v3l2.500 1" stroke="#444" fill="none"/><path d="M4 13a6 6 0 0 1 4-7l-1-2 5 2-3 4-.500-2a4 4 0 0 0-2.500 5z" fill="#36a336"/></svg>
  <span class="t" style="left:878px;top:121px;letter-spacing:0.08px">History</span>
  <div class="grp" style="left:829px;width:60px;letter-spacing:-0.07px">Open</div>
  <div class="sep" style="left:927px;top:72px;height:84px"></div>

  <!-- RIBBON: select -->
  <svg class="abs" style="left:934px;top:75px" width="17" height="17" viewBox="0 0 17 17"><g fill="#a8d1f5" stroke="#3e8ddd"><rect x=".5" y=".5" width="7" height="7"/><rect x="9.500" y=".5" width="7" height="7"/><rect x=".5" y="9.500" width="7" height="7"/><rect x="9.500" y="9.500" width="7" height="7"/></g></svg>
  <span class="t" style="left:954px;top:77px;letter-spacing:-0.19px">Select all</span>
  <svg class="abs" style="left:935px;top:98px" width="15" height="15" viewBox="0 0 15 15"><g fill="#fff" stroke="#a0a0a0"><rect x=".5" y=".5" width="5.500" height="5.500"/><rect x="8.500" y=".5" width="5.500" height="5.500"/><rect x=".5" y="8.500" width="5.500" height="5.500"/><rect x="8.500" y="8.500" width="5.500" height="5.500"/></g></svg>
  <span class="t" style="left:954px;top:99px;letter-spacing:-0.11px">Select none</span>
  <svg class="abs" style="left:934px;top:119px" width="17" height="17" viewBox="0 0 17 17"><g stroke="#3e8ddd"><rect x=".5" y="3.500" width="6" height="6" fill="#fff" stroke="#a0a0a0"/><rect x="9.500" y=".5" width="7" height="7" fill="#a8d1f5"/><rect x=".5" y="10.500" width="6" height="6" fill="#a8d1f5"/><rect x="9.500" y="10.500" width="6" height="6" fill="#fff" stroke="#a0a0a0"/></g></svg>
  <span class="t" style="left:954px;top:121px;letter-spacing:0.03px">Invert selection</span>
  <div class="grp" style="left:954px;width:60px;letter-spacing:-0.45px">Select</div>
  <div class="sep" style="left:1042px;top:72px;height:84px"></div>

  <!-- ADDRESS BAR -->
  <svg class="abs" style="left:296px;top:172px" width="14" height="12" viewBox="0 0 14 12"><path d="M13 6H1.500M6 1.500L1.500 6 6 10.500" fill="none" stroke="#c8c8c8" stroke-width="1.200"/></svg>
  <svg class="abs" style="left:325px;top:172px" width="14" height="12" viewBox="0 0 14 12"><path d="M1 6h11.500M8 1.500L12.500 6 8 10.500" fill="none" stroke="#c8c8c8" stroke-width="1.200"/></svg>
  <div class="arr" style="left:352px;top:177px;border-top-color:#c0c0c0"></div>
  <svg class="abs" style="left:370px;top:171px" width="12" height="14" viewBox="0 0 12 14"><path d="M6 13V1.500M1.500 6L6 1.500 10.500 6" fill="none" stroke="#6a6a6a" stroke-width="1.300"/></svg>
  <div class="abs" style="left:390px;top:167px;width:436px;height:22px;border:1px solid #d9d9d9;background:#fff"></div>
  <svg class="abs" style="left:393px;top:169px" width="16" height="17" viewBox="0 0 16 17"><path d="M5 0h6v7.500h4.500L8 16 .5 7.500H5z" fill="#3b8ede"/></svg>
  <span class="t chev" style="left:415px;top:171px">&#8250;</span>
  <span class="t" style="left:430px;top:171px;letter-spacing:-0.31px">This PC</span>
  <span class="t chev" style="left:477px;top:171px">&#8250;</span>
  <span class="t" style="left:492px;top:171px;letter-spacing:-0.04px">Local Disk (C:)</span>
  <span class="t chev" style="left:575px;top:171px">&#8250;</span>
  <span class="t" style="left:590px;top:171px;letter-spacing:-0.51px">Users</span>
  <span class="t chev" style="left:627px;top:171px">&#8250;</span>
  <span class="t" style="left:641px;top:171px;letter-spacing:0.35px">admin</span>
  <span class="t chev" style="left:683px;top:171px">&#8250;</span>
  <span class="t" style="left:698px;top:171px;letter-spacing:0.20px">Downloads</span>
  <svg class="abs" style="left:812px;top:175px" width="10" height="7" viewBox="0 0 10 7"><path d="M1 1l4 4 4-4" fill="none" stroke="#444" stroke-width="1.300"/></svg>
  <div class="abs" style="left:825px;top:167px;width:17px;height:22px;border:1px solid #d9d9d9;border-left:1px solid #e5e5e5"></div>
  <svg class="abs" style="left:828px;top:172px" width="12" height="13" viewBox="0 0 12 13"><path d="M6 2.500a4.200 4.200 0 1 0 4.200 4.200" fill="none" stroke="#555" stroke-width="1.200"/><path d="M5.500 .5v4h4" fill="none" stroke="#555" stroke-width="1.200"/></svg>
  <div class="abs" style="left:854px;top:167px;width:202px;height:22px;border:1px solid #d9d9d9;background:#fff"></div>
  <span class="t" style="left:863px;top:171px;color:#6d6d6d;letter-spacing:0.02px">Search Downloads</span>
  <svg class="abs" style="left:1035px;top:172px" width="13" height="13" viewBox="0 0 13 13"><circle cx="8" cy="5" r="3.600" fill="none" stroke="#555" stroke-width="1.300"/><path d="M5.500 7.500L1 12" stroke="#555" stroke-width="1.600"/></svg>

  <!-- NAV PANE -->
  <div class="abs" id="nav" style="left:284px;top:196px;width:140px;height:387px;overflow:hidden">
    <div class="abs" style="left:0;top:360px;width:140px;height:24px;background:#d9d9d9"></div>
    <svg class="abs" style="left:41px;top:5px" width="14" height="15" viewBox="0 0 14 15"><rect width="14" height="15" fill="#3a3f4a"/><rect x="3" y="1" width="8" height="6" fill="#d2c268"/><rect x="3" y="8" width="8" height="6" fill="#3f74c8"/><path d="M1.500 1v13M12.500 1v13" stroke="#e8e8e8" stroke-width="1.400" stroke-dasharray="1.500 1.500"/></svg>
    <span class="t" style="left:61px;top:5px;letter-spacing:0.01px">Videos</span>
    <svg class="abs" style="left:39px;top:27px" width="17" height="17" viewBox="0 0 17 17"><g fill="#22a7e8"><rect x="1" y="2" width="2.500" height="2.500"/><rect x="4.500" y="2" width="2.500" height="2.500"/><rect x="1" y="5.500" width="2.500" height="2.500"/><rect x="4.500" y="5.500" width="2.500" height="2.500"/></g><path d="M3 11l3-3.500h8l2.500 3.500z" fill="#c9ced6"/><rect x="3" y="11" width="13.500" height="4" fill="#3c3f45"/><rect x="12.500" y="12.500" width="2.500" height="1" fill="#5fd15f"/></svg>
    <span class="t" style="left:61px;top:29px;letter-spacing:-0.04px">Local Disk (C:)</span>
    <svg class="abs fl" style="left:50px;top:52px" width="12" height="16" viewBox="0 0 12 16"><path d="M0 0h9.500v8.500h2.500v7.500H0z" fill="#fdf0c4"/><path d="M9.500 8.500h2.500v7.500H9.500z" fill="#f8e5ac"/></svg>
    <span class="t" style="left:69px;top:53px;letter-spacing:0.17px">$WinREAgent</span>
    <svg class="abs" style="left:50px;top:76px" width="12" height="16" viewBox="0 0 12 16"><path d="M0 0h9.500v8.500h2.500v7.500H0z" fill="#fde28a"/><path d="M9.500 8.500h2.500v7.500H9.500z" fill="#f2cd62"/></svg>
    <span class="t" style="left:69px;top:77px;letter-spacing:-0.12px">PerfLogs</span>
    <svg class="abs" style="left:50px;top:100px" width="12" height="16" viewBox="0 0 12 16"><path d="M0 0h9.500v8.500h2.500v7.500H0z" fill="#fde28a"/><path d="M9.500 8.500h2.500v7.500H9.500z" fill="#f2cd62"/></svg>
    <span class="t" style="left:69px;top:101px;letter-spacing:0.08px">Program Files</span>
    <svg class="abs" style="left:50px;top:124px" width="12" height="16" viewBox="0 0 12 16"><path d="M0 0h9.500v8.500h2.500v7.500H0z" fill="#fde28a"/><path d="M9.500 8.500h2.500v7.500H9.500z" fill="#f2cd62"/></svg>
    <span class="t" style="left:69px;top:125px;letter-spacing:0.15px">Program Files (x86)</span>
    <svg class="abs" style="left:50px;top:148px" width="12" height="16" viewBox="0 0 12 16"><path d="M0 0h9.500v8.500h2.500v7.500H0z" fill="#fdf0c4"/><path d="M9.500 8.500h2.500v7.500H9.500z" fill="#f8e5ac"/></svg>
    <span class="t" style="left:69px;top:149px;letter-spacing:0.11px">ProgramData</span>
    <svg class="abs" style="left:50px;top:172px" width="12" height="16" viewBox="0 0 12 16"><path d="M0 0h9.500v8.500h2.500v7.500H0z" fill="#fde28a"/><path d="M9.500 8.500h2.500v7.500H9.500z" fill="#f2cd62"/></svg>
    <span class="t" style="left:69px;top:173px;letter-spacing:-0.51px">Users</span>
    <svg class="abs" style="left:58px;top:196px" width="12" height="16" viewBox="0 0 12 16"><path d="M0 0h9.500v8.500h2.500v7.500H0z" fill="#fde28a"/><path d="M9.500 8.500h2.500v7.500H9.500z" fill="#f2cd62"/></svg>
    <span class="t" style="left:77px;top:197px;letter-spacing:0.35px">admin</span>
    <svg class="abs" style="left:66px;top:220px" width="12" height="16" viewBox="0 0 12 16"><path d="M0 0h9.500v8.500h2.500v7.500H0z" fill="#fde28a"/><path d="M9.500 8.500h2.500v7.500H9.500z" fill="#f2cd62"/></svg>
    <span class="t" style="left:85px;top:221px;letter-spacing:0.29px">.ms-ad</span>
    <svg class="abs" style="left:64px;top:244px" width="17" height="16" viewBox="0 0 17 16"><path d="M8.500 1l7 3v8l-7 3.500-7-3.500V4z" fill="#3ab8ea"/><path d="M8.500 7.500l7-3.500v8l-7 3.500z" fill="#1283c8"/><path d="M1.500 4l7-3 7 3-7 3.500z" fill="#b8ecfb"/><path d="M3 6.500l3 1.500v4l-3-1.500z" fill="#e8f8fe" opacity=".8"/></svg>
    <span class="t" style="left:85px;top:245px;letter-spacing:0.16px">3D Objects</span>
    <svg class="abs" style="left:66px;top:268px" width="12" height="16" viewBox="0 0 12 16"><path d="M0 0h9.500v8.500h2.500v7.500H0z" fill="#fdf0c4"/><path d="M9.500 8.500h2.500v7.500H9.500z" fill="#f8e5ac"/></svg>
    <span class="t" style="left:85px;top:269px;letter-spacing:0.13px">AppData</span>
    <svg class="abs" style="left:64px;top:294px" width="16" height="12" viewBox="0 0 16 12"><rect x=".5" y=".5" width="15" height="11" fill="#d6e6f6" stroke="#5b7fb5"/><circle cx="5" cy="4.500" r="1.700" fill="#3b8a4a"/><path d="M2.500 9.500a2.500 2.500 0 0 1 5 0z" fill="#3b8a4a"/><path d="M9.500 4h4.500M9.500 6.500h4.500" stroke="#5b7fb5"/></svg>
    <span class="t" style="left:85px;top:293px;letter-spacing:0.13px">Contacts</span>
    <svg class="abs" style="left:64px;top:318px" width="17" height="13" viewBox="0 0 17 13"><rect width="17" height="11" fill="#1a8be3"/><rect y="11" width="17" height="2" fill="#0f5fae"/><path d="M1 11.500h2M14 11.500h2" stroke="#dfefff" stroke-width="1"/></svg>
    <span class="t" style="left:85px;top:317px;letter-spacing:0.05px">Desktop</span>
    <svg class="abs" style="left:66px;top:339px" width="13" height="17" viewBox="0 0 13 17"><path d="M.5 .5h8.500l3.500 3.500v12.500h-12z" fill="#fff" stroke="#8a8fa3"/><path d="M3 4h3M3 6.500h7M3 9h7M3 11.500h7M3 14h7" stroke="#5178b8" stroke-width="1"/></svg>
    <span class="t" style="left:85px;top:341px;letter-spacing:0.26px">Documents</span>
    <svg class="abs" style="left:64px;top:363px" width="17" height="17" viewBox="0 0 17 17"><path d="M5.500 0h6v7.500H16L8.500 16 1 7.500h4.500z" fill="#3b8ede"/></svg>
    <span class="t" style="left:85px;top:365px;letter-spacing:0.20px">Downloads</span>
  </div>
  <!-- nav scrollbar -->
  <div class="abs" style="left:424px;top:196px;width:16px;height:387px;background:#f0f0f0"></div>
  <div class="abs" style="left:425px;top:365px;width:14px;height:74px;background:#cdcdcd"></div>
  <svg class="abs" style="left:427px;top:201px" width="10" height="8" viewBox="0 0 10 8"><path d="M1 6.500l4-4 4 4" fill="none" stroke="#505050" stroke-width="1.700"/></svg>
  <svg class="abs" style="left:427px;top:570px" width="10" height="8" viewBox="0 0 10 8"><path d="M1 1.500l4 4 4-4" fill="none" stroke="#505050" stroke-width="1.700"/></svg>

  <!-- FILE LIST header -->
  <span class="t hd" style="left:461px;top:202px;letter-spacing:0.22px">Name</span>
  <span class="t hd" style="left:722px;top:202px;letter-spacing:0.31px">Date modified</span>
  <span class="t hd" style="left:866px;top:202px;letter-spacing:-0.40px">Type</span>
  <span class="t hd" style="left:986px;top:202px;letter-spacing:-0.69px">Size</span>
  <div class="sep" style="left:715px;top:197px;height:24px;background:#e5e5e5"></div>
  <div class="sep" style="left:859px;top:197px;height:24px;background:#e5e5e5"></div>
  <div class="sep" style="left:979px;top:197px;height:24px;background:#e5e5e5"></div>
  <div class="sep" style="left:1059px;top:197px;height:24px;background:#e5e5e5"></div>
  <svg class="abs" style="left:783px;top:197px" width="8" height="5" viewBox="0 0 8 5"><path d="M.5 .5l3.500 3.500L7.500 .5" fill="none" stroke="#8a8a8a" stroke-width="1"/></svg>
  <!-- group: today -->
  <svg class="abs" style="left:450px;top:236px" width="12" height="8" viewBox="0 0 12 8"><path d="M1 1l5 5 5-5" fill="none" stroke="#8a8a8a" stroke-width="1.200"/></svg>
  <span class="t gh" style="left:465px;top:230px;letter-spacing:-0.14px">Today (1)</span>
  <div class="abs" style="left:534px;top:240px;width:525px;height:1px;background:#e2e2e2"></div>
  <div class="abs" style="left:458px;top:255px;width:597px;height:22px;background:#d9d9d9;border-bottom:1px solid #d0d0d0"></div>
  <svg class="abs" style="left:463px;top:257px" width="14" height="17" viewBox="0 0 14 17"><path d="M.5 .5h9l4 4v12h-13z" fill="#f7fbfe" stroke="#c2c9d4"/><path d="M9.500 .5v4h4" fill="#eef2f8" stroke="#c2c9d4"/><ellipse cx="6.500" cy="9" rx="4.500" ry="5.500" fill="#d8eefb"/><path d="M7 4v7.500" stroke="#1d8fd6" stroke-width="1.500"/><path d="M7 4c.500 2 2.500 2.500 2.500 4.500" stroke="#1d8fd6" stroke-width="1.300" fill="none"/><ellipse cx="5.200" cy="11.800" rx="2.300" ry="1.800" fill="#1d8fd6"/></svg>
  <span class="t" style="left:482px;top:259px;letter-spacing:0.03px">glass.mp3</span>
  <span class="t dm" style="left:722px;top:259px;letter-spacing:0.11px">2/28/2025 8:46 AM</span>
  <span class="t dm" style="left:866px;top:259px;letter-spacing:0.15px">MP3 Format Sound</span>
  <span class="t dm" style="left:980px;top:259px;width:72px;text-align:right;letter-spacing:-0.39px">6,244 KB</span>
  <!-- group: long time ago -->
  <svg class="abs" style="left:450px;top:289px" width="12" height="8" viewBox="0 0 12 8"><path d="M1 1l5 5 5-5" fill="none" stroke="#8a8a8a" stroke-width="1.200"/></svg>
  <span class="t gh" style="left:465px;top:283px;letter-spacing:0.16px">A long time ago (4)</span>
  <div class="abs" style="left:602px;top:293px;width:457px;height:1px;background:#e2e2e2"></div>

  <svg class="abs" style="left:464px;top:311px" width="13" height="16" viewBox="0 0 13 16"><path d="M.5 .5h8.500l3.500 3.500v11.500H.5z" fill="#fff" stroke="#c2c5ca"/><path d="M9 .5v3.500h3.500" fill="none" stroke="#c2c5ca"/><rect x="3" y="6.500" width="6.500" height="5" fill="#e8ecf0" stroke="#9aa3ae" stroke-width=".9"/><rect x="4.500" y="8" width="3.500" height="2" fill="#4f6478"/></svg>
  <span class="t" style="left:482px;top:312px;letter-spacing:0.36px">picturethem.jpg</span>
  <span class="t dm" style="left:722px;top:312px;letter-spacing:0.16px">11/21/2023 5:52 AM</span>
  <span class="t dm" style="left:866px;top:312px;letter-spacing:-0.46px">JPG File</span>
  <span class="t dm" style="left:980px;top:312px;width:72px;text-align:right;letter-spacing:-0.41px">22 KB</span>

  <svg class="abs" style="left:464px;top:332px" width="13" height="16" viewBox="0 0 13 16"><path d="M.5 .5h8.500l3.500 3.500v11.500H.5z" fill="#fff" stroke="#c2c5ca"/><path d="M9 .5v3.500h3.500" fill="none" stroke="#c2c5ca"/><rect x="3" y="6.500" width="6.500" height="5" fill="#e8ecf0" stroke="#9aa3ae" stroke-width=".9"/><rect x="4.500" y="8" width="3.500" height="2" fill="#4f6478"/></svg>
  <span class="t" style="left:482px;top:333px;letter-spacing:0.12px">easilyreports.png</span>
  <span class="t dm" style="left:722px;top:333px;letter-spacing:0.06px">4/23/2022 11:25 PM</span>
  <span class="t dm" style="left:866px;top:333px;letter-spacing:-0.16px">PNG File</span>
  <span class="t dm" style="left:980px;top:333px;width:72px;text-align:right;letter-spacing:-0.68px">4 KB</span>

  <svg class="abs" style="left:464px;top:353px" width="13" height="16" viewBox="0 0 13 16"><path d="M.5 .5h8.500l3.500 3.500v11.500H.5z" fill="#fff" stroke="#c2c5ca"/><path d="M9 .5v3.500h3.500" fill="none" stroke="#c2c5ca"/><rect x="3" y="6.500" width="6.500" height="5" fill="#e8ecf0" stroke="#9aa3ae" stroke-width=".9"/><rect x="4.500" y="8" width="3.500" height="2" fill="#4f6478"/></svg>
  <span class="t" style="left:482px;top:354px;letter-spacing:0.21px">coveragepay.png</span>
  <span class="t dm" style="left:722px;top:354px;letter-spacing:0.22px">6/9/2021 4:11 AM</span>
  <span class="t dm" style="left:866px;top:354px;letter-spacing:-0.16px">PNG File</span>
  <span class="t dm" style="left:980px;top:354px;width:72px;text-align:right;letter-spacing:-0.68px">4 KB</span>

  <svg class="abs" style="left:464px;top:374px" width="13" height="16" viewBox="0 0 13 16"><path d="M.5 .5h8.500l3.500 3.500v11.500H.5z" fill="#fff" stroke="#c2c5ca"/><path d="M9 .5v3.500h3.500" fill="none" stroke="#c2c5ca"/><rect x="3" y="6.500" width="6.500" height="5" fill="#e8ecf0" stroke="#9aa3ae" stroke-width=".9"/><rect x="4.500" y="8" width="3.500" height="2" fill="#4f6478"/></svg>
  <span class="t" style="left:482px;top:375px;letter-spacing:0.19px">nowcross.jpg</span>
  <span class="t dm" style="left:722px;top:375px;letter-spacing:0.04px">9/24/2020 4:59 PM</span>
  <span class="t dm" style="left:866px;top:375px;letter-spacing:-0.46px">JPG File</span>
  <span class="t dm" style="left:980px;top:375px;width:72px;text-align:right;letter-spacing:-0.61px">15 KB</span>

  <!-- horizontal scrollbar -->
  <div class="abs" style="left:444px;top:567px;width:623px;height:16px;background:#f0f0f0"></div>
  <div class="abs" style="left:461px;top:568px;width:588px;height:14px;background:#cdcdcd"></div>
  <svg class="abs" style="left:449px;top:570px" width="8" height="10" viewBox="0 0 8 10"><path d="M6 1L2 5l4 4" fill="none" stroke="#404040" stroke-width="1.700"/></svg>
  <svg class="abs" style="left:1055px;top:570px" width="8" height="10" viewBox="0 0 8 10"><path d="M2 1l4 4-4 4" fill="none" stroke="#404040" stroke-width="1.700"/></svg>

  <!-- STATUS BAR -->
  <span class="t sb" style="left:298px;top:588px;letter-spacing:0.11px">5 items</span>
  <span class="t sb" style="left:357px;top:588px;letter-spacing:0.07px">1 item selected</span>
  <span class="t sb" style="left:442px;top:588px;letter-spacing:-0.17px">6.09 MB</span>
  <div class="abs" style="left:1020px;top:583px;width:22px;height:23px;background:#cce8ff;border:1px solid #59a4dd"></div>
  <svg class="abs" style="left:1024px;top:588px" width="16" height="13" viewBox="0 0 16 13"><g fill="#fff" stroke="#8b7a6c" stroke-width="1"><rect x=".5" y=".5" width="3" height="3"/><rect x=".5" y="4.500" width="3" height="3"/><rect x=".5" y="8.500" width="3" height="3"/></g><path d="M6 2h4M11.500 2h4M6 6h4M11.500 6h4M6 10h4M11.500 10h4" stroke="#555" stroke-width="1"/></svg>
  <svg class="abs" style="left:1046px;top:588px" width="14" height="11" viewBox="0 0 14 11"><rect x=".5" y=".5" width="13" height="10" fill="#fff" stroke="#8b8fa3"/><rect x="2" y="2" width="10" height="7" fill="#3c78b8"/><path d="M2 9l4-4 3 2 3-1.500V9z" fill="#5a8f5a"/><path d="M2 2h10v2.500H2z" fill="#9cc4ea"/></svg>
</div>

<!-- WATERMARK -->
<svg class="abs" id="wm" style="left:1030px;top:605px" width="210" height="72" viewBox="0 0 210 72">
  <g opacity=".5">
  <g fill="#fff" stroke="#fff" stroke-width=".9" font-family="Liberation Sans, sans-serif" font-size="50.700">
    <text x="9" y="54.500" textLength="64" lengthAdjust="spacingAndGlyphs">ANY</text>
    <text x="141" y="54.500" textLength="59" lengthAdjust="spacingAndGlyphs">RUN</text>
  </g>
  <path d="M84 11L80.500 13.500V56.500L92.500 64.500 133 36 92 6.500V49.500M93 19.500L119.500 37.500 86 60.500" fill="none" stroke="#fff" stroke-width="3.400" stroke-linejoin="round" stroke-linecap="round"/>
  </g>
</svg>
<!-- TASKBAR -->
<div class="abs" id="tb">
  <!-- start -->
  
  <svg class="abs" style="left:16px;top:12px" width="16" height="16" viewBox="0 0 16 16"><path d="M0 2.300L6.500 1.400v6.200H0zM7.300 1.300L16 0v7.600H7.300zM0 8.400h6.500v6.200L0 13.700zM7.300 8.400H16V16l-8.700-1.300z" fill="#fff"/></svg>
  <!-- search -->
  <div class="abs" style="left:48px;top:0;width:288px;height:40px;background:#f2f2f2;border-top:1px solid #e6e6e6;overflow:hidden">
    <svg class="abs" style="left:12px;top:11px" width="17" height="17" viewBox="0 0 17 17"><circle cx="10.500" cy="6.500" r="5" fill="none" stroke="#222" stroke-width="1.300"/><path d="M7 10L1 16" stroke="#222" stroke-width="1.500"/></svg>
    <span class="t" style="left:40px;top:11px;font-size:14.600px;line-height:18px;color:#2b2b2b">Type here to search</span>
    <!-- lantern art -->
    <svg class="abs" style="left:200px;top:4px" width="88" height="36" viewBox="0 0 88 36">
      <path d="M7 36C20 30 40 26 60 25h28v11z" fill="#8a8796"/>
      <path d="M30 36c10-5 30-8 58-8v8z" fill="#a79fb0" opacity=".7"/>
      <ellipse cx="42" cy="31" rx="13" ry="3" fill="#e6d94a" opacity=".85"/>
      <ellipse cx="64" cy="28.500" rx="9" ry="2.200" fill="#e48a9a" opacity=".8"/>
      <path d="M41.500 2.500l1.500 0v2c4 1 6.500 4 7 8h-15.500c.5-4 3-7 7-8z" fill="#5a4632"/>
      <rect x="34" y="12" width="17" height="18" fill="#4a3a2a"/>
      <rect x="36" y="13.500" width="13" height="15" fill="#ffd84a"/><rect x="39" y="16" width="7" height="11" fill="#fff3b0"/>
      <path d="M63.500 5l1 0v1.500c3 .8 5 3 5.500 6H57.500c.5-3 2.500-5.200 6-6z" fill="#5a4036"/>
      <rect x="57.500" y="12.500" width="13" height="14" fill="#4e342c"/>
      <rect x="59" y="13.500" width="10" height="12" fill="#f06a5a"/><rect x="61.500" y="15.500" width="5" height="8.500" fill="#ffc0a8"/>
    </svg>
  </div>
  <!-- task view -->
  <svg class="abs" style="left:351px;top:12px" width="18" height="16" viewBox="0 0 18 16"><g fill="none" stroke="#fff" stroke-width="1.200"><rect x="2.500" y="3.500" width="9" height="8"/><path d="M.5 .8h12.500M.5 14.800h12.500"/></g><rect x="14.500" y="1" width="2" height="14" fill="none"/><path d="M15.500 .5v3.500M15.500 8.500v6.500" stroke="#fff" stroke-width="1.200"/><rect x="14.300" y="5" width="2.600" height="2.600" fill="#fff"/></svg>
  <!-- edge (active) -->
  <div class="abs" style="left:387px;top:0;width:48px;height:40px;background:rgba(255,255,255,.23)"></div>
  <div class="abs" style="left:387px;top:38px;width:48px;height:2px;background:#7ab8ec"></div>
  <svg class="abs" style="left:398px;top:7px" width="26" height="26" viewBox="0 0 50 50">
    <defs><linearGradient id="teg1" x1="0" y1="0" x2="1" y2="1"><stop offset="0" stop-color="#35c1f1"/><stop offset=".5" stop-color="#36c5c0"/><stop offset="1" stop-color="#6fdc4a"/></linearGradient>
    <linearGradient id="teg2" x1="0" y1="0" x2="0" y2="1"><stop offset="0" stop-color="#1d84d8"/><stop offset="1" stop-color="#114a9b"/></linearGradient></defs>
    <path d="M1.500 24C2 10 12 1.500 25 1.500c14 0 23.500 9.500 23.500 20 0 7.500-5.500 12-12 12-5 0-7.500-2-7.500-4 0-1.500 1.500-2 1.500-5 0-4-4-8.500-11-8.500C10 16 3 21 1.500 28z" fill="url(#teg1)"/>
    <path d="M19.500 16C10 16 1.500 22 1.500 28c.5 11 10 20.500 22 20.500 3 0 5.500-.5 8-1.500C22 46 14 38 14 29c0-6 3-10.500 7.500-13z" fill="#1b78d0"/>
    <path d="M21.500 16C17 19 14 23.500 14 29c0 10 8 17.500 17.500 18 6-2 11-6 14-11.500.5-1-.5-1.500-1.500-1-2.500 1.500-5 2-8 2-8.500 0-14-5.500-14-12 0-3 1-5 2.500-7-1-.5-2-1-3-1.500z" fill="url(#teg2)"/>
  </svg>
  <!-- explorer -->
  <div class="abs" style="left:440px;top:38px;width:40px;height:2px;background:#7ab8ec"></div>
  <svg class="abs" style="left:448px;top:10px" width="23" height="20" viewBox="0 0 23 20"><path d="M0 1.500h8l2 2h13v15H0z" fill="#f4b92e"/><path d="M0 5h23v14H0z" fill="#fcd76a"/><path d="M5 11h13v8H5z" fill="#3e94dc"/><path d="M8 14h7v5H8z" fill="#fcd76a"/></svg>
  <!-- firefox -->
  <svg class="abs" style="left:497px;top:7px" width="24" height="26" viewBox="0 0 48 50">
    <defs><linearGradient id="tff1" x1=".8" y1="0" x2=".2" y2="1"><stop offset="0" stop-color="#ffe14a"/><stop offset=".35" stop-color="#ffa52a"/><stop offset=".7" stop-color="#ff4a3d"/><stop offset="1" stop-color="#f1217c"/></linearGradient></defs>
    <path d="M30 1.500c-4 3-6 8-5.500 12.500C21 12 17 12.500 14 14.500c0-2-.5-3.500-1.500-5-1 2-3 3-4.500 5.500C5.500 14 4.500 12 4.500 10 2 14 .5 19 1 26 2 39 12 48.500 24.500 48.500S47 39 47 26c0-5-1-8.500-3-12 .5 3 .5 5 0 7-1-6-4.500-10-7.500-12.500C33.500 6 31 4 30 1.500z" fill="url(#tff1)"/>
    <circle cx="25" cy="27" r="10.500" fill="#7a4fe0"/>
    <path d="M14 20c2-5 8-7 13-5.500 3 1 5 2.500 6 5-2-1.500-4-2-6-1.500 3 1.500 4.500 4 4.500 7-2-3-5-3.500-7.500-3-3 .7-4.500 3-4 5.500.5 3 3 5 6.500 5 4 0 7-2 8.500-5 0 6-5 11.500-12 11.500-8 0-13.500-6-13.500-13 0-3 1-6 3-8 .5 1 .8 2 1.500 2z" fill="#ff7a1a" opacity=".92"/>
  </svg>
  <!-- notepad++ -->
  <div class="abs" style="left:538px;top:38px;width:40px;height:2px;background:#7ab8ec"></div>
  <svg class="abs" style="left:545px;top:6px" width="26" height="27" viewBox="0 0 26 27"><defs><linearGradient id="npg" x1="0" y1="0" x2="0" y2="1"><stop offset="0" stop-color="#fbfdf6"/><stop offset=".45" stop-color="#dff0c4"/><stop offset=".7" stop-color="#8fd04e"/><stop offset="1" stop-color="#5fb62e"/></linearGradient></defs><rect x="2" y="3" width="18" height="23" fill="url(#npg)" stroke="#e4ecd8" stroke-width=".9"/><path d="M4 1.800v2.400M7 1.800v2.400M10 1.800v2.400M13 1.800v2.400M16 1.800v2.400" stroke="#999" stroke-width="1"/><text x="5.500" y="15" font-family="Liberation Sans, sans-serif" font-size="9" font-weight="bold" fill="#222" textLength="11" lengthAdjust="spacingAndGlyphs">[]++</text><path d="M22.500 1l1.500 1.500-7 13-2 1 .3-2.300z" fill="#e8c94a" stroke="#a88a20" stroke-width=".5"/></svg>
  <!-- powershell -->
  <div class="abs" style="left:587px;top:38px;width:40px;height:2px;background:#7ab8ec"></div>
  <svg class="abs" style="left:595px;top:11px" width="24" height="18" viewBox="0 0 24 18"><path d="M4.500 0H24l-4.500 18H0z" fill="#4679dc"/><path d="M6.500 3.500l6 5-7.500 5.500" fill="none" stroke="#fff" stroke-width="2"/><path d="M12 14.500h6" stroke="#fff" stroke-width="1.800"/></svg>
  <!-- tray -->
  <svg class="abs" style="left:1073px;top:16px" width="12" height="8" viewBox="0 0 12 8"><path d="M.8 7L6 1.500 11.200 7" fill="none" stroke="#fff" stroke-width="1.300"/></svg>
  <svg class="abs" style="left:1097px;top:11px" width="13" height="18" viewBox="0 0 13 18"><g fill="none" stroke="#fff" stroke-width="1.200"><rect x="1.500" y="5.500" width="7" height="7" rx="1.500"/><path d="M8.500 8l3-2v6l-3-2z"/><path d="M2.500 3.500c2-2.500 6-2.500 8 0M2.500 14.500c2 2.500 6 2.500 8 0"/></g></svg>
  <svg class="abs" style="left:1119px;top:13px" width="17" height="15" viewBox="0 0 17 15"><g fill="none" stroke="#fff" stroke-width="1.200"><path d="M4.500 1.500h11v8h-11z"/><path d="M10 9.500v3.500M6 13.500h8"/><rect x=".6" y=".6" width="4.500" height="4" fill="#050c1e"/><path d="M2.800 4.600v9h3"/></g></svg>
  <svg class="abs" style="left:1142px;top:12px" width="18" height="16" viewBox="0 0 18 16"><g fill="none" stroke="#fff" stroke-width="1.200"><path d="M1 5.500h2.500L7 2v12L3.500 10.500H1z"/><path d="M9.500 5.500c1 1.500 1 3.500 0 5M12 3.500c2 2.700 2 6.300 0 9M14.500 1.500c3 4 3 9 0 13"/></g></svg>
  <span class="t" style="left:1164px;top:3px;width:60px;text-align:center;color:#fff;font-size:11.600px">8:49 AM</span>
  <span class="t" style="left:1164px;top:21px;width:60px;text-align:center;color:#fff;font-size:11.600px">2/28/2025</span>
  <svg class="abs" style="left:1238px;top:11px" width="26" height="26" viewBox="0 0 26 26"><path d="M1 1h15.500v12H8l-4 3.500V13H1z" fill="#fff"/><path d="M4 4.500h9.500M4 7h9.500M4 9.500h9.500" stroke="#050c1e" stroke-width="1"/><circle cx="16" cy="16" r="7.300" fill="#3a3f48" stroke="#8a8f98" stroke-width="1.200"/><text x="16" y="20" font-family="Liberation Sans, sans-serif" font-size="10.500" font-weight="bold" fill="#fff" text-anchor="middle">1</text></svg>
  <div class="abs" style="left:1275px;top:0;width:1px;height:40px;background:#5a6068"></div>
</div>
</body>
</html>
